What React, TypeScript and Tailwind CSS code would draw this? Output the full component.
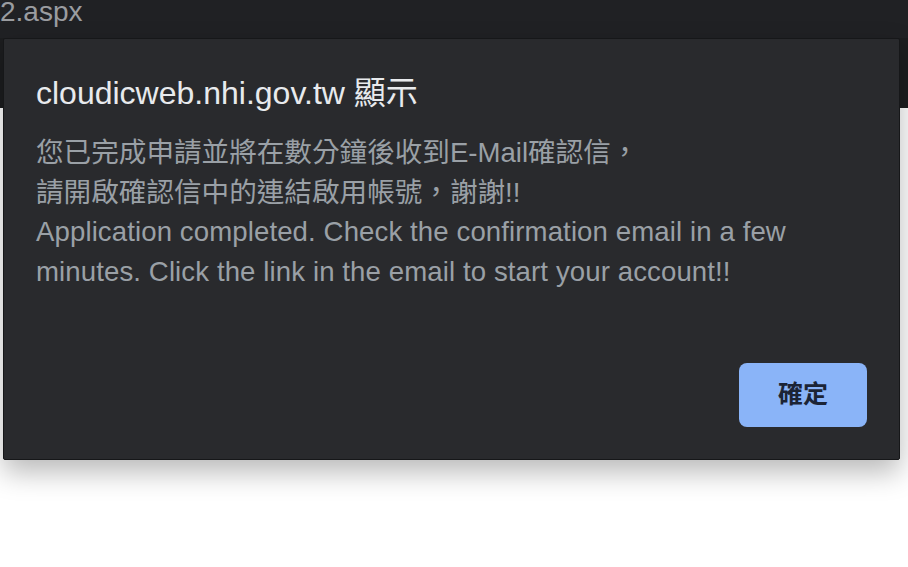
export default function App() {
  const font = { fontFamily: '"Liberation Sans", Arial, "Noto Sans CJK TC", sans-serif' };

  return (
    <div className="relative w-[908px] h-[567px] overflow-hidden bg-white" style={font}>
      {/* page behind the alert */}
      <div className="h-[38px] bg-[#202124] overflow-hidden">
        <div className="-mt-[2px] text-[28px] leading-[28px] text-[#9a9ca0]">2.aspx</div>
      </div>
      <div className="h-[70px] bg-[#1c1d1f]" />

      {/* alert dialog */}
      <div className="absolute left-[3px] top-[38px] w-[897px] h-[422px] flex flex-col bg-[#292a2d] border border-[#161719] rounded-[2px] shadow-[0_12px_28px_rgba(0,0,0,0.28)] pl-[32px] pr-[32px] pt-[34px]">
        <h1 className="text-[32px] leading-[40px] text-[#e8eaed]">cloudicweb.nhi.gov.tw 顯示</h1>
        <div className="mt-[20px] text-[27.6px] leading-[39.7px] text-[#9aa0a6]">
          <p>您已完成申請並將在數分鐘後收到E-Mail確認信，</p>
          <p>請開啟確認信中的連結啟用帳號，謝謝!!</p>
          <p className="tracking-[0.1px]">Application completed. Check the confirmation email in a few</p>
          <p className="tracking-[0.1px]">minutes. Click the link in the email to start your account!!</p>
        </div>
        <div className="mt-[71px] flex justify-end">
          <button className="w-[128px] h-[64px] rounded-[8px] bg-[#8ab4f8] text-[#1c2436] text-[25px] font-bold">
            確定
          </button>
        </div>
      </div>
    </div>
  );
}
